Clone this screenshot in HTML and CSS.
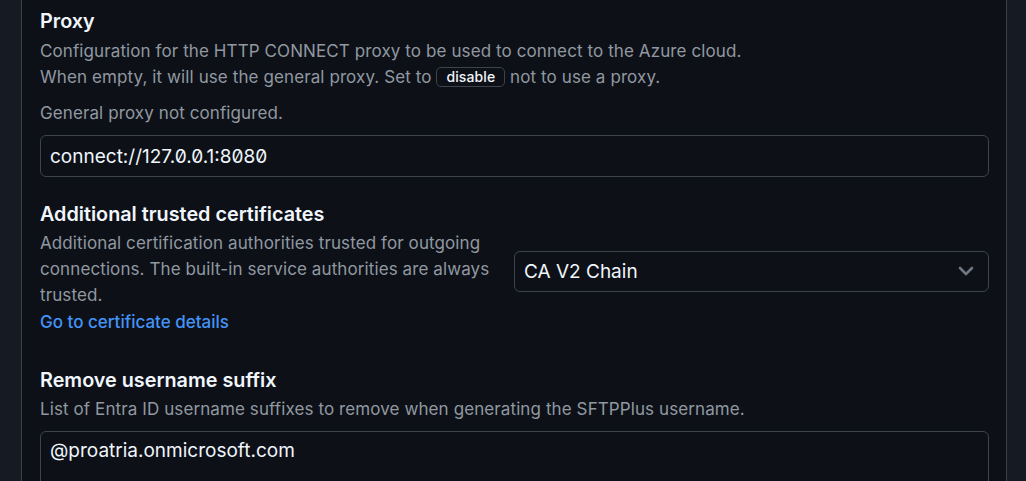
FILE: index.html
```html
<!DOCTYPE html>
<html lang="en">
<head>
<meta charset="utf-8">
<title>Settings</title>
<link rel="stylesheet" href="styles.css">
</head>
<body>
<div class="page">
  <aside class="side side-left"></aside>
  <main class="panel">
    <section class="field">
      <h3 class="label">Proxy</h3>
      <p class="desc">Configuration for the HTTP CONNECT proxy to be used to connect to the Azure cloud.<br>When empty, it will use the general proxy. Set to <code class="chip">disable</code> not to use a proxy.</p>
      <p class="desc note">General proxy not configured.</p>
      <div class="input"><span class="value">connect://127.0.0.1:8080</span></div>
    </section>
    <section class="field field-row">
      <div class="col-text">
        <h3 class="label">Additional trusted certificates</h3>
        <p class="desc">Additional certification authorities trusted for outgoing connections. The built-in service authorities are always trusted.</p>
        <a class="link" href="#">Go to certificate details</a>
      </div>
      <div class="select">
        <span class="value">CA V2 Chain</span>
        <svg class="chev" width="16" height="10" viewBox="0 0 16 10"><path d="M2 2l6 6 6-6" fill="none" stroke="currentColor" stroke-width="2.6" stroke-linecap="round" stroke-linejoin="round"/></svg>
      </div>
    </section>
    <section class="field">
      <h3 class="label">Remove username suffix</h3>
      <p class="desc">List of Entra ID username suffixes to remove when generating the SFTPPlus username.</p>
      <div class="input textarea"><span class="value">@proatria.onmicrosoft.com</span></div>
    </section>
  </main>
  <aside class="side side-right"></aside>
</div>
</body>
</html>
```
FILE: styles.css
```css
* { box-sizing: border-box; }
html, body { margin: 0; padding: 0; height: 100%; }
body {
  background: #151a22;
  font-family: Inter, "Noto Sans", sans-serif;
  color: #e6edf3;
  overflow: hidden;
}
.page {
  display: flex;
  height: 481px;
}
.side { background: #161b23; }
.side-left { width: 21px; flex: none; }
.side-right { width: 19px; flex: none; }
.panel {
  flex: 1;
  background: #0d1117;
  border-left: 1px solid #3a3f48;
  border-right: 1px solid #3a3f48;
  padding: 8px 17px 0 18px;
  display: flex;
  flex-direction: column;
}
.field { display: flex; flex-direction: column; }
.label {
  margin: 0;
  font-size: 19.8px;
  font-weight: 600;
  line-height: 26px;
  color: #f0f6fc;
}
.desc {
  margin: 4px 0 0;
  font-size: 17px;
  letter-spacing: 0.1px;
  line-height: 26px;
  color: #9198a1;
}
.note { margin-top: 10px; }
.chip {
  display: inline-block;
  font-family: Inter, "Noto Sans", sans-serif;
  font-size: 14px;
  font-weight: 500;
  line-height: 18px;
  color: #f0f6fc;
  border: 1px solid #3d444d;
  border-radius: 5px;
  padding: 0 9px;
  background: #0d1117;
  vertical-align: 1px;
}
.input {
  margin-top: 9px;
  height: 42px;
  border: 1px solid #3d444d;
  border-radius: 6px;
  padding: 0 9px;
  display: flex;
  align-items: center;
  background: #0d1117;
}
.value {
  font-size: 19px;
  color: #f0f6fc;
  font-feature-settings: "zero" 1;
}
.textarea { align-items: flex-start; padding-top: 7px; height: 70px; }
.field + .field { margin-top: 24px; }
.field-row {
  flex-direction: row;
  align-items: center;
  gap: 23px;
}
.col-text { flex: 1; display: flex; flex-direction: column; }
.col-text .desc { margin-top: 3px; }
.link {
  color: #4493f8;
  text-decoration: none;
  font-size: 17px;
  font-weight: 500;
  line-height: 26px;
  margin-top: 1px;
}
.select {
  width: 475px;
  flex: none;
  height: 41px;
  border: 1px solid #3d444d;
  border-radius: 6px;
  padding: 0 14px 0 9px;
  display: flex;
  align-items: center;
  justify-content: space-between;
  margin-top: 6px;
}
.chev { color: #6e7681; }
.field-row + .field { margin-top: 32px; }
.field-row + .field .desc { margin-top: 3px; }
```
